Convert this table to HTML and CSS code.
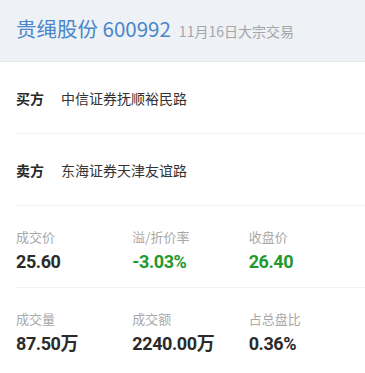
FILE: index.html
```html
<!DOCTYPE html>
<html lang="zh-CN">
<head>
<meta charset="utf-8">
<link rel="stylesheet" href="styles.css">
</head>
<body>
<div class="header">
  <span class="title">贵绳股份 600992</span>
  <span class="subtitle">11月16日大宗交易</span>
</div>
<div class="party">
  <span class="party-label">买方</span>
  <span class="party-name">中信证券抚顺裕民路</span>
</div>
<div class="party">
  <span class="party-label">卖方</span>
  <span class="party-name">东海证券天津友谊路</span>
</div>
<div class="stats">
  <div class="stat"><div class="stat-label">成交价</div><div class="stat-value">25.60</div></div>
  <div class="stat"><div class="stat-label">溢/折价率</div><div class="stat-value green">-3.03%</div></div>
  <div class="stat"><div class="stat-label">收盘价</div><div class="stat-value green">26.40</div></div>
</div>
<div class="stats last">
  <div class="stat"><div class="stat-label">成交量</div><div class="stat-value">87.50万</div></div>
  <div class="stat"><div class="stat-label">成交额</div><div class="stat-value">2240.00万</div></div>
  <div class="stat"><div class="stat-label">占总盘比</div><div class="stat-value">0.36%</div></div>
</div>
</body>
</html>
```
FILE: styles.css
```css
html, body {
  margin: 0;
  padding: 0;
  background: #ffffff;
  font-family: "Noto Sans CJK SC", sans-serif;
}
.header {
  height: 61px;
  background: #eef1f5;
  border-bottom: 1px solid #e6eaef;
  padding: 0 16px;
  display: flex;
  align-items: baseline;
}
.title {
  font-size: 20.5px;
  line-height: 56px;
  color: #4a86c9;
}
.subtitle {
  margin-left: 8px;
  font-size: 14px;
  color: #a3a6aa;
}
.party {
  margin-left: 16px;
  height: 71px;
  border-bottom: 1px solid #f0f2f5;
  display: flex;
  align-items: center;
  font-size: 14px;
}
.party-label {
  font-weight: bold;
  color: #2a2a2a;
  width: 45px;
}
.party-name {
  color: #333333;
}
.stats {
  margin-left: 16px;
  display: grid;
  grid-template-columns: 1fr 1fr 1fr;
  padding: 22px 0 13px;
  border-bottom: 1px solid #f0f2f5;
}
.stats.last {
  border-bottom: none;
}
.stat-label {
  font-size: 13px;
  line-height: 18px;
  color: #a8a8a8;
}
.stat-value {
  margin-top: 4px;
  font-family: "Roboto", "Noto Sans CJK SC", sans-serif;
  font-size: 18px;
  line-height: 24px;
  font-weight: bold;
  letter-spacing: -0.4px;
  color: #2b2b2b;
}
.green {
  color: #1f9a2e;
}
```
